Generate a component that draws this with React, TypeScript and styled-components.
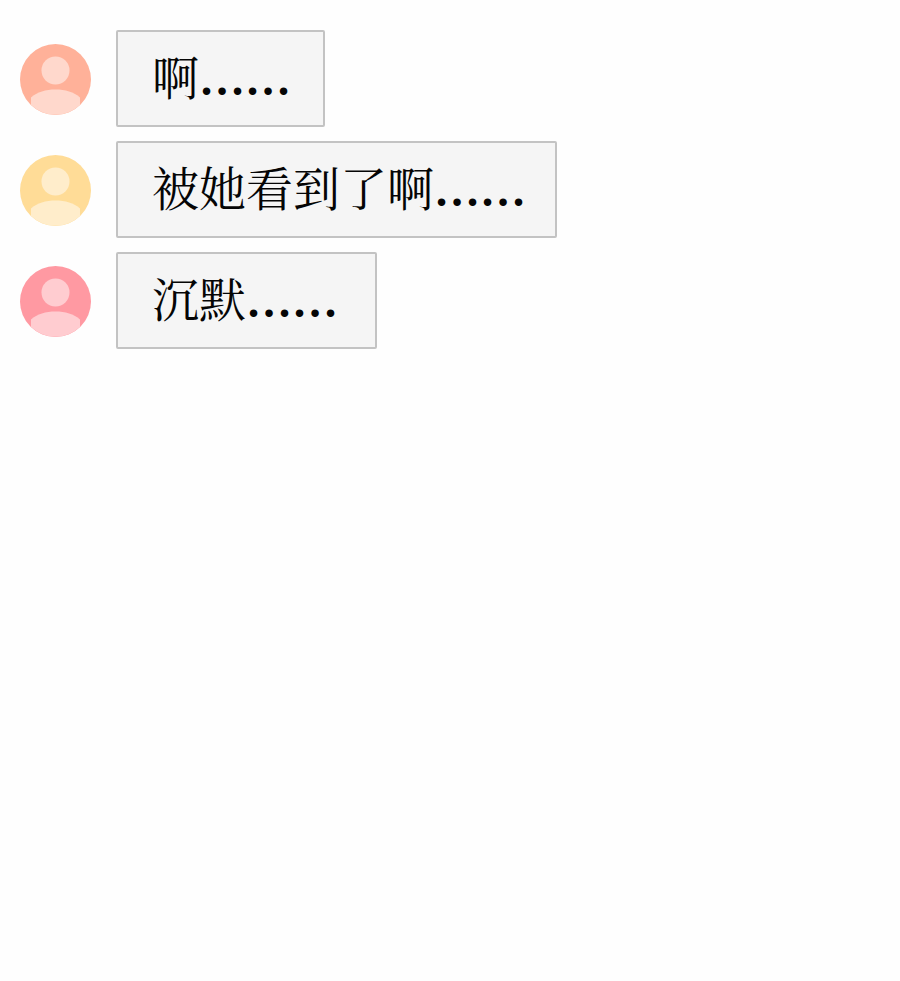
import React from "react";
import styled, { createGlobalStyle } from "styled-components";

const GlobalStyle = createGlobalStyle`
  * { box-sizing: border-box; }
  body { margin: 0; background: #fefefe; }
`;

const Thread = styled.ul`
  list-style: none;
  margin: 0;
  padding: 30px 20px;
  display: flex;
  flex-direction: column;
  gap: 14px;
`;

const Message = styled.li`
  display: flex;
  align-items: center;
  gap: 25px;
`;

const Avatar = styled.svg`
  width: 71px;
  height: 71px;
  margin-top: 2px;
  flex: none;
`;

const Bubble = styled.p<{ $end: number }>`
  margin: 0;
  padding: 0 ${(p) => p.$end}px 7px 34px;
  border: 2px solid #c3c3c3;
  border-radius: 2px;
  background: #f5f5f5;
  color: #050505;
  font-family: "Noto Serif CJK SC", "Noto Sans CJK SC", serif;
  font-weight: 400;
  font-size: 47px;
  line-height: 86px;
`;

const Pause = styled.span`
  font-family: "Liberation Serif", serif;
  font-weight: 700;
  font-size: 46px;
  line-height: 1;
`;

const messages = [
  { id: "a", text: "啊", end: 32, base: "#ffb199", figure: "#ffd8cc" },
  { id: "b", text: "被她看到了啊", end: 29, base: "#ffdc97", figure: "#ffedcb" },
  { id: "c", text: "沉默", end: 37, base: "#ff99a2", figure: "#ffccd0" },
];

export default function App() {
  return (
    <>
      <GlobalStyle />
      <Thread lang="zh-CN">
        {messages.map((m) => (
          <Message key={m.id}>
            <Avatar viewBox="0 0 71 71" aria-hidden="true">
              <circle cx="35.5" cy="35.5" r="35.5" fill={m.base} />
              <circle cx="35.5" cy="26.5" r="14" fill={m.figure} />
              <path d="M11 61V53.500C17 48 26 45.500 35.500 45.500S54 48 60 53.500V61A35.500 35.500 0 0 1 11 61Z" fill={m.figure} />
            </Avatar>
            <Bubble $end={m.end}>
              {m.text}
              <Pause>……</Pause>
            </Bubble>
          </Message>
        ))}
      </Thread>
    </>
  );
}
